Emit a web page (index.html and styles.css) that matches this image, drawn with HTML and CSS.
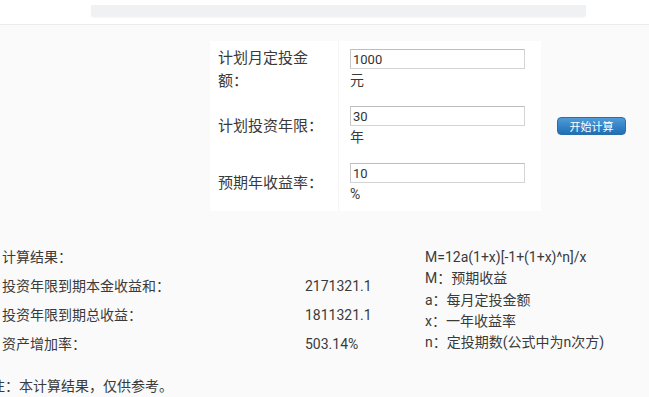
FILE: index.html
```html
<!DOCTYPE html>
<html lang="zh-CN">
<head>
    <meta charset="UTF-8">
    <meta name="viewport" content="width=device-width, initial-scale=1.0">
    <title>定投计算器</title>
    <link rel="stylesheet" href="styles.css">
</head>
<body>
    <div class="topbar">
        <div class="searchbar"></div>
    </div>

    <div class="page">
        <div class="calc">
            <table class="form">
                <tr>
                    <td class="label">计划月定投金额：</td>
                    <td class="field">
                        <input type="text" id="amount" value="1000">
                        <span class="unit">元</span>
                    </td>
                </tr>
                <tr>
                    <td class="label">计划投资年限：</td>
                    <td class="field">
                        <input type="text" id="years" value="30">
                        <span class="unit">年</span>
                    </td>
                </tr>
                <tr class="last">
                    <td class="label">预期年收益率：</td>
                    <td class="field">
                        <input type="text" id="rate" value="10">
                        <span class="unit">%</span>
                    </td>
                </tr>
            </table>
            <button onclick="calculate()">开始计算</button>
        </div>

        <div class="results">
            <div class="result-list">
                <div class="row"><span class="name">计算结果：</span></div>
                <div class="row"><span class="name">投资年限到期本金收益和：</span><span id="total">2171321.1</span></div>
                <div class="row"><span class="name">投资年限到期总收益：</span><span id="profit">1811321.1</span></div>
                <div class="row"><span class="name">资产增加率：</span><span id="growth">503.14%</span></div>
            </div>
            <div class="formula">
                <div>M=12a(1+x)[-1+(1+x)^n]/x</div>
                <div>M：预期收益</div>
                <div>a：每月定投金额</div>
                <div>x：一年收益率</div>
                <div>n：定投期数(公式中为n次方)</div>
            </div>
        </div>

        <p class="note">注：本计算结果，仅供参考。</p>
    </div>

    <script>
        function calculate() {
            const a = parseFloat(document.getElementById('amount').value);
            const n = parseFloat(document.getElementById('years').value);
            const x = parseFloat(document.getElementById('rate').value) / 100;
            if (isNaN(a) || isNaN(n) || isNaN(x) || x === 0) {
                alert("请输入正确的数字！");
                return;
            }
            const total = 12 * a * (1 + x) * (-1 + Math.pow(1 + x, n)) / x;
            const principal = 12 * a * n;
            document.getElementById('total').textContent = total.toFixed(1);
            document.getElementById('profit').textContent = (total - principal).toFixed(1);
            document.getElementById('growth').textContent = ((total - principal) / principal * 100).toFixed(2) + '%';
        }
    </script>
</body>
</html>
```

FILE: styles.css
```css
body {
    margin: 0;
    font-family: Roboto, "Noto Sans CJK SC", sans-serif;
    color: #3a3a3a;
    background-color: #fafafa;
    overflow: hidden;
}
.topbar {
    height: 25px;
    background: #ffffff;
    border-bottom: 1px solid #ececec;
    padding-left: 91px;
    box-sizing: border-box;
}
.searchbar {
    position: relative;
    top: 5px;
    width: 495px;
    height: 12px;
    background: #f0f1f3;
    border-radius: 0 0 3px 3px;
    box-shadow: 0 1px 2px rgba(0, 0, 0, 0.04);
}
.page {
    padding-top: 16px;
}
.calc {
    display: flex;
    align-items: center;
    gap: 16px;
    padding-left: 210px;
}
.form {
    background: #ffffff;
    border-collapse: collapse;
}
.form .label {
    width: 112px;
    padding: 0 8px;
    font-size: 15px;
    line-height: 23px;
    vertical-align: middle;
    border-right: 1px solid #f6f6f6;
}
.form .field {
    padding: 8px 16px 8px 11px;
    vertical-align: top;
}
.form .last .field {
    padding-bottom: 7px;
}
input {
    width: 175px;
    height: 20px;
    box-sizing: border-box;
    border: 1px solid #d4d4d4;
    border-top-color: #bdbdbd;
    border-left-color: #c8c8c8;
    padding: 0 2px;
    font-family: Roboto, sans-serif;
    font-size: 13px;
    color: #333;
    display: block;
}
.unit {
    display: block;
    margin-top: 2px;
    font-size: 14px;
    line-height: 19px;
}
button {
    width: 69px;
    height: 18px;
    padding: 0;
    border: 1px solid #2a6ea9;
    border-radius: 4px;
    background: linear-gradient(#4f9bd9, #1f6fb6);
    color: #ffffff;
    font-family: "Noto Sans CJK SC", sans-serif;
    font-size: 11px;
    line-height: 16px;
    cursor: pointer;
}
.results {
    display: flex;
    margin-top: 32px;
}
.result-list {
    width: 423px;
    padding-left: 2px;
    font-size: 14px;
}
.row {
    display: flex;
    height: 29px;
    line-height: 29px;
}
.row .name {
    width: 303px;
}
.formula {
    padding-top: 4px;
    font-size: 14px;
    line-height: 21.3px;
}
.note {
    margin: 17px 0 0 -9px;
    font-size: 14px;
    line-height: 20px;
}
```
